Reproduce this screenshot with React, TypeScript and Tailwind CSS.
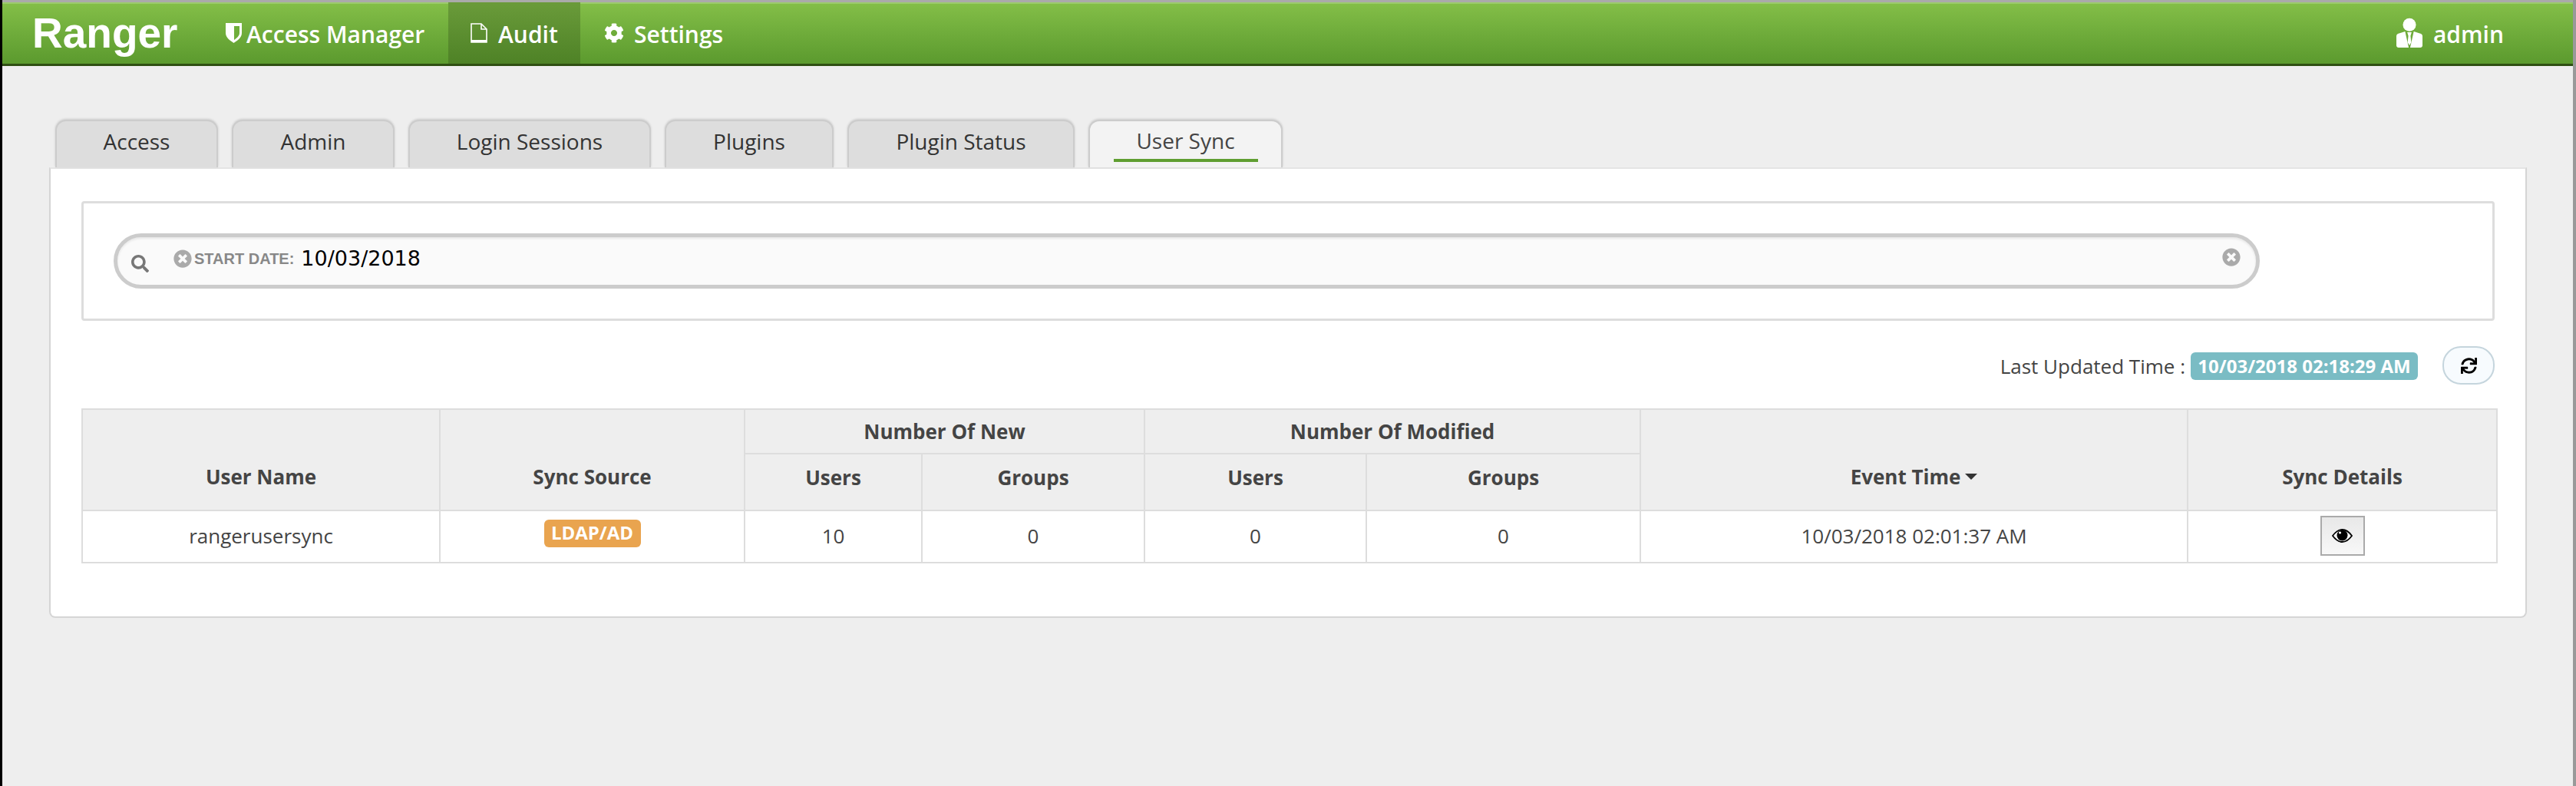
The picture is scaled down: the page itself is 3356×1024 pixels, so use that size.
import { FaCog, FaSearch, FaSync, FaTimesCircle } from 'react-icons/fa'

const TABS = [
  { label: 'Access', width: 'w-[212px]' },
  { label: 'Admin', width: 'w-[212px]' },
  { label: 'Login Sessions', width: 'w-[316px]' },
  { label: 'Plugins', width: 'w-[220px]' },
  { label: 'Plugin Status', width: 'w-[296px]' },
]

const thClass = 'border-2 border-[#ddd] bg-[#eee] font-bold text-[#444] text-center align-middle p-0'
const tdClass = 'border-2 border-[#ddd] bg-white text-center align-middle p-0 pb-[2px] text-[#444]'

function UserIcon() {
  return (
    <svg width="34" height="40" viewBox="0 0 36 42" fill="white">
      <circle cx="18" cy="9.5" r="9" />
      <path d="M2 22 L12 19 L17 41 H3 Q0 41 0 38 V25 Q0 23 2 22 Z" />
      <path d="M34 22 L24 19 L19 41 H33 Q36 41 36 38 V25 Q36 23 34 22 Z" />
      <path d="M15 20 H21 L19.5 25 L20.5 34 L18 38 L15.5 34 L16.5 25 Z" />
    </svg>
  )
}

function ShieldIcon() {
  return (
    <svg width="21" height="26" viewBox="0 0 21 26">
      <path d="M0 0 H21 V13 C21 19 15 23 10.5 26 C6 23 0 19 0 13 Z" fill="white" />
      <path d="M11 4 H18 V13 C18 17 14 20 11 22 Z" fill="#6fae3b" />
    </svg>
  )
}

function FileIcon() {
  return (
    <svg width="22" height="26" viewBox="0 0 22 26" fill="none" stroke="white" strokeWidth="1.6">
      <path d="M1 1 H14 L21 8 V25 H1 Z" />
      <path d="M14 1 V8 H21" />
      <path d="M1 23.5 H21" strokeWidth="3" />
    </svg>
  )
}

function EyeIcon() {
  return (
    <svg width="27" height="18" viewBox="0 0 27 18">
      <path d="M1 9 C5 3.5 9 1 13.5 1 C18 1 22 3.5 26 9 C22 14.5 18 17 13.5 17 C9 17 5 14.5 1 9 Z" fill="white" stroke="black" strokeWidth="1.8" />
      <circle cx="13.5" cy="8.5" r="7" fill="black" />
      <circle cx="10.5" cy="5" r="1.6" fill="white" />
    </svg>
  )
}

export default function App() {
  return (
    <div className="h-screen overflow-hidden border-l-[3px] border-r-[4px] border-l-black border-r-[#999] bg-[#eee] font-['Open_Sans','Noto_Sans',sans-serif]">
      <header className="box-border flex h-[86px] items-stretch border-t-[3px] border-b-[3px] border-t-[#aaa] border-b-[#2f4f12] bg-gradient-to-b from-[#84bf48] to-[#5b9a2e] pl-[39px] pr-[90px] text-[30px] text-white shadow-[inset_0_2px_0_rgba(255,255,255,0.2)]">
        <div className="flex w-[240px] items-center font-['Liberation_Sans',sans-serif] text-[55px] font-bold">Ranger</div>
        <div className="flex w-[302px] items-center gap-[6px] pl-[12px]">
          <ShieldIcon />
          <span className="pt-[2px] font-semibold">Access Manager</span>
        </div>
        <div className="flex w-[172px] items-center gap-[14px] bg-gradient-to-b from-[#6a9b3a] to-[#4e8226] pl-[29px] font-semibold">
          <FileIcon />
          <span className="pt-[2px]">Audit</span>
        </div>
        <div className="flex items-center gap-[13px] pl-[31px] font-semibold">
          <FaCog size={26} />
          <span className="pt-[2px]">Settings</span>
        </div>
        <div className="ml-auto flex items-center gap-[14px] font-semibold">
          <UserIcon />
          <span className="pt-[2px]">admin</span>
        </div>
      </header>

      <main className="pl-[61px] pr-[60px] pt-[68px]">
        <nav className="flex h-[64px] items-end gap-[18px] pl-[8px] text-[28px] text-[#333]">
          {TABS.map((tab) => (
            <div
              key={tab.label}
              className={`${tab.width} flex h-[62px] items-center justify-center rounded-t-[14px] border-2 border-b-0 border-[#ccc] bg-[#ddd] pb-[8px] shadow-[0_-1px_3px_rgba(0,0,0,0.15)]`}
            >
              {tab.label}
            </div>
          ))}
          <div className="flex h-[62px] w-[253px] flex-col items-center rounded-t-[14px] border-2 border-b-0 border-[#ccc] bg-[#f3f3f3] shadow-[0_-1px_3px_rgba(0,0,0,0.15)]">
            <span className="flex h-[53px] w-[188px] items-center justify-center border-b-[4px] border-[#5f9e31] text-[#444]">User Sync</span>
          </div>
        </nav>

        <section className="box-border h-[587px] rounded-b-lg border-2 border-[#d5d5d5] border-t-[#e4e4e4] bg-white px-[40px] pt-[42px]">
          <div className="box-border flex h-[156px] items-center rounded border-[3px] border-[#ddd] pl-[39px]">
            <div className="relative box-border flex h-[72px] w-[2796px] items-center rounded-[36px] border-[5px] border-[#ccc] bg-[#fafafa] pb-[6px] pl-[18px] shadow-[inset_0_2px_3px_rgba(0,0,0,0.08)]">
              <FaSearch size={23} className="mt-3 text-[#777]" />
              <FaTimesCircle size={24} className="ml-[32px] text-[#aaa]" />
              <span className="ml-[3px] font-['Liberation_Sans',sans-serif] text-[20px] font-bold text-[#888]">START DATE:</span>
              <span className="ml-[9px] font-['DejaVu_Sans',sans-serif] text-[27px] text-black">10/03/2018</span>
              <FaTimesCircle size={24} className="absolute right-[20px] top-[14px] text-[#aaa]" />
            </div>
          </div>

          <div className="flex h-[116px] items-center justify-end pt-[2px] text-[26px] text-[#444]">
            <span>Last Updated Time :</span>
            <span className="ml-[7px] flex h-[36px] w-[296px] items-center justify-center rounded-md bg-[#7abcc4] text-[24px] font-bold text-white">10/03/2018 02:18:29 AM</span>
            <button className="ml-[32px] -mt-[2px] flex h-[50px] w-[68px] items-center justify-center rounded-[24px] border-2 border-[#c5d5dd] bg-[#f7fbfe] text-black">
              <FaSync size={21} />
            </button>
          </div>

          <table className="-mt-[2px] w-[3146px] table-fixed border-collapse text-[26px]">
            <colgroup>
              <col className="w-[466px]" />
              <col className="w-[397px]" />
              <col className="w-[231px]" />
              <col className="w-[290px]" />
              <col className="w-[289px]" />
              <col className="w-[357px]" />
              <col className="w-[713px]" />
              <col className="w-[403px]" />
            </colgroup>
            <thead>
              <tr className="h-[58px]">
                <th rowSpan={2} className={`${thClass} pt-[44px]`}>User Name</th>
                <th rowSpan={2} className={`${thClass} pt-[44px]`}>Sync Source</th>
                <th colSpan={2} className={thClass}>Number Of New</th>
                <th colSpan={2} className={thClass}>Number Of Modified</th>
                <th rowSpan={2} className={`${thClass} pt-[44px]`}>
                  Event Time
                  <span className="ml-[6px] inline-block border-x-[8px] border-t-[8px] border-x-transparent border-t-[#333] align-[6px]" />
                </th>
                <th rowSpan={2} className={`${thClass} pt-[44px]`}>Sync Details</th>
              </tr>
              <tr className="h-[74px]">
                <th className={`${thClass} pb-[12px]`}>Users</th>
                <th className={`${thClass} pb-[12px]`}>Groups</th>
                <th className={`${thClass} pb-[12px]`}>Users</th>
                <th className={`${thClass} pb-[12px]`}>Groups</th>
              </tr>
            </thead>
            <tbody>
              <tr className="h-[68px]">
                <td className={tdClass}>rangerusersync</td>
                <td className={tdClass}>
                  <span className="inline-flex h-[36px] w-[126px] items-center justify-center rounded-md bg-[#e9a44f] pb-[1px] align-[6px] text-[24px] font-bold text-white">LDAP/AD</span>
                </td>
                <td className={tdClass}>10</td>
                <td className={tdClass}>0</td>
                <td className={tdClass}>0</td>
                <td className={tdClass}>0</td>
                <td className={tdClass}>10/03/2018 02:01:37 AM</td>
                <td className={tdClass}>
                  <button className="inline-flex h-[52px] w-[58px] items-center justify-center border-2 border-[#aaa] bg-gradient-to-b from-[#e8e8e8] to-[#f8f8f8] align-middle">
                    <EyeIcon />
                  </button>
                </td>
              </tr>
            </tbody>
          </table>
        </section>
      </main>
    </div>
  )
}
